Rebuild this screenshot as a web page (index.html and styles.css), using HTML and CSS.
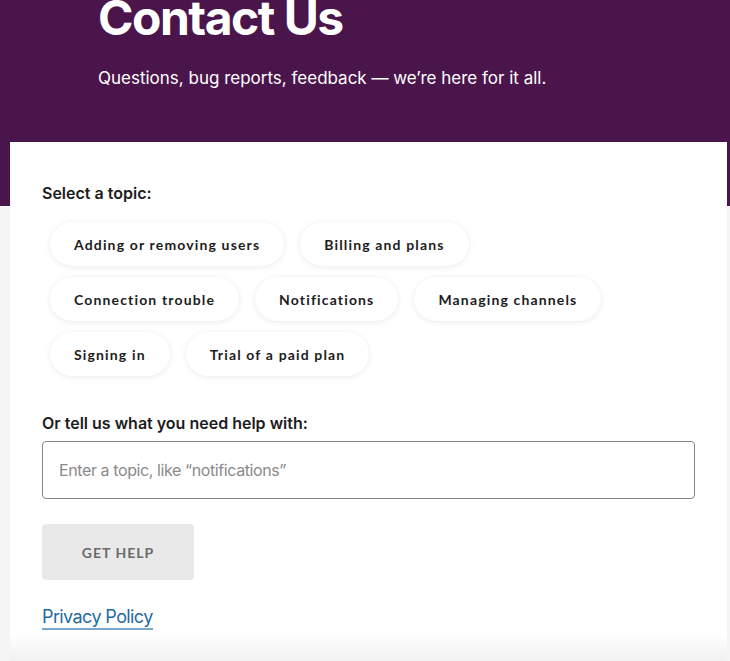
FILE: index.html
```html
<!DOCTYPE html>
<html>
<head>
<meta charset="utf-8">
<link rel="stylesheet" href="styles.css">
</head>
<body>
<header class="hero">
  <h1 class="hero-title">Contact Us</h1>
  <p class="hero-sub">Questions, bug reports, feedback — we’re here for it all.</p>
</header>
<main class="card">
  <h2 class="label">Select a topic:</h2>
  <div class="chips">
    <button class="chip">Adding or removing users</button>
    <button class="chip">Billing and plans</button>
    <button class="chip">Connection trouble</button>
    <button class="chip">Notifications</button>
    <button class="chip">Managing channels</button>
    <button class="chip">Signing in</button>
    <button class="chip">Trial of a paid plan</button>
  </div>
  <h2 class="label label-second">Or tell us what you need help with:</h2>
  <input class="topic-input" type="text" placeholder="Enter a topic, like “notifications”">
  <button class="get-help">GET HELP</button>
  <a class="privacy" href="#">Privacy Policy</a>
</main>
</body>
</html>
```
FILE: styles.css
```css
html, body {
  margin: 0;
  padding: 0;
}
body {
  background: #f5f5f5;
  font-family: "Lato", "Inter", sans-serif;
  overflow: hidden;
  height: 661px;
}
.hero {
  display: flow-root;
  background: #4a154b;
  height: 206px;
  padding-left: 98px;
  box-sizing: border-box;
  color: #fff;
}
.hero-title {
  margin: 0;
  font-family: "Inter", sans-serif;
  font-weight: 700;
  font-size: 48px;
  letter-spacing: -1.5px;
  line-height: 48px;
  margin-top: -6px;
}
.hero-sub {
  margin: 0;
  margin-top: 26px;
  font-family: "Inter", sans-serif;
  font-size: 17px;
  font-weight: 400;
}
.card {
  background: linear-gradient(to bottom, #fff calc(100% - 30px), #f0f0f0 100%);
  margin: -64px 3px 0 10px;
  padding: 40px 32px 33px 32px;
  display: flex;
  flex-direction: column;
  align-items: flex-start;
  min-height: 519px;
  box-sizing: border-box;
}
.card > * {
  flex-shrink: 0;
}
.label {
  margin: 0;
  font-family: "Inter", sans-serif;
  font-weight: 600;
  font-size: 16px;
  color: #1d1c1d;
  line-height: 22px;
}
.chips {
  display: flex;
  flex-wrap: wrap;
  gap: 11px 16px;
  margin: 18px 0 0 8px;
  max-width: 600px;
}
.chip {
  border: none;
  background: #fff;
  border-radius: 22px;
  height: 44px;
  padding: 0 24px;
  font-family: "Lato", sans-serif;
  font-weight: 700;
  font-size: 14px;
  letter-spacing: 1.15px;
  color: #1d1c1d;
  box-shadow: 0 1px 6px rgba(0, 0, 0, 0.08), 0 0 2px rgba(0, 0, 0, 0.03);
}
.label-second {
  margin-top: 36px;
}
.topic-input {
  margin-top: 7px;
  width: 100%;
  height: 58px;
  box-sizing: border-box;
  border: 1px solid #868686;
  border-radius: 4px;
  padding: 0 16px;
  font-family: "Inter", sans-serif;
  font-size: 16px;
  color: #1d1c1d;
}
.topic-input::placeholder {
  color: #8a8a8a;
  letter-spacing: -0.4px;
}
.get-help {
  margin-top: 25px;
  width: 152px;
  height: 56px;
  border: none;
  border-radius: 4px;
  background: #e9e9e9;
  color: #6b6b6b;
  font-family: "Lato", sans-serif;
  font-weight: 700;
  font-size: 14px;
  letter-spacing: 1px;
}
.privacy {
  margin-top: 26px;
  font-family: "Inter", sans-serif;
  font-size: 18px;
  color: #1f6aa5;
  text-decoration: none;
  border-bottom: 2px solid #7aa6c8;
  line-height: 22px;
  letter-spacing: -0.6px;
}
```
